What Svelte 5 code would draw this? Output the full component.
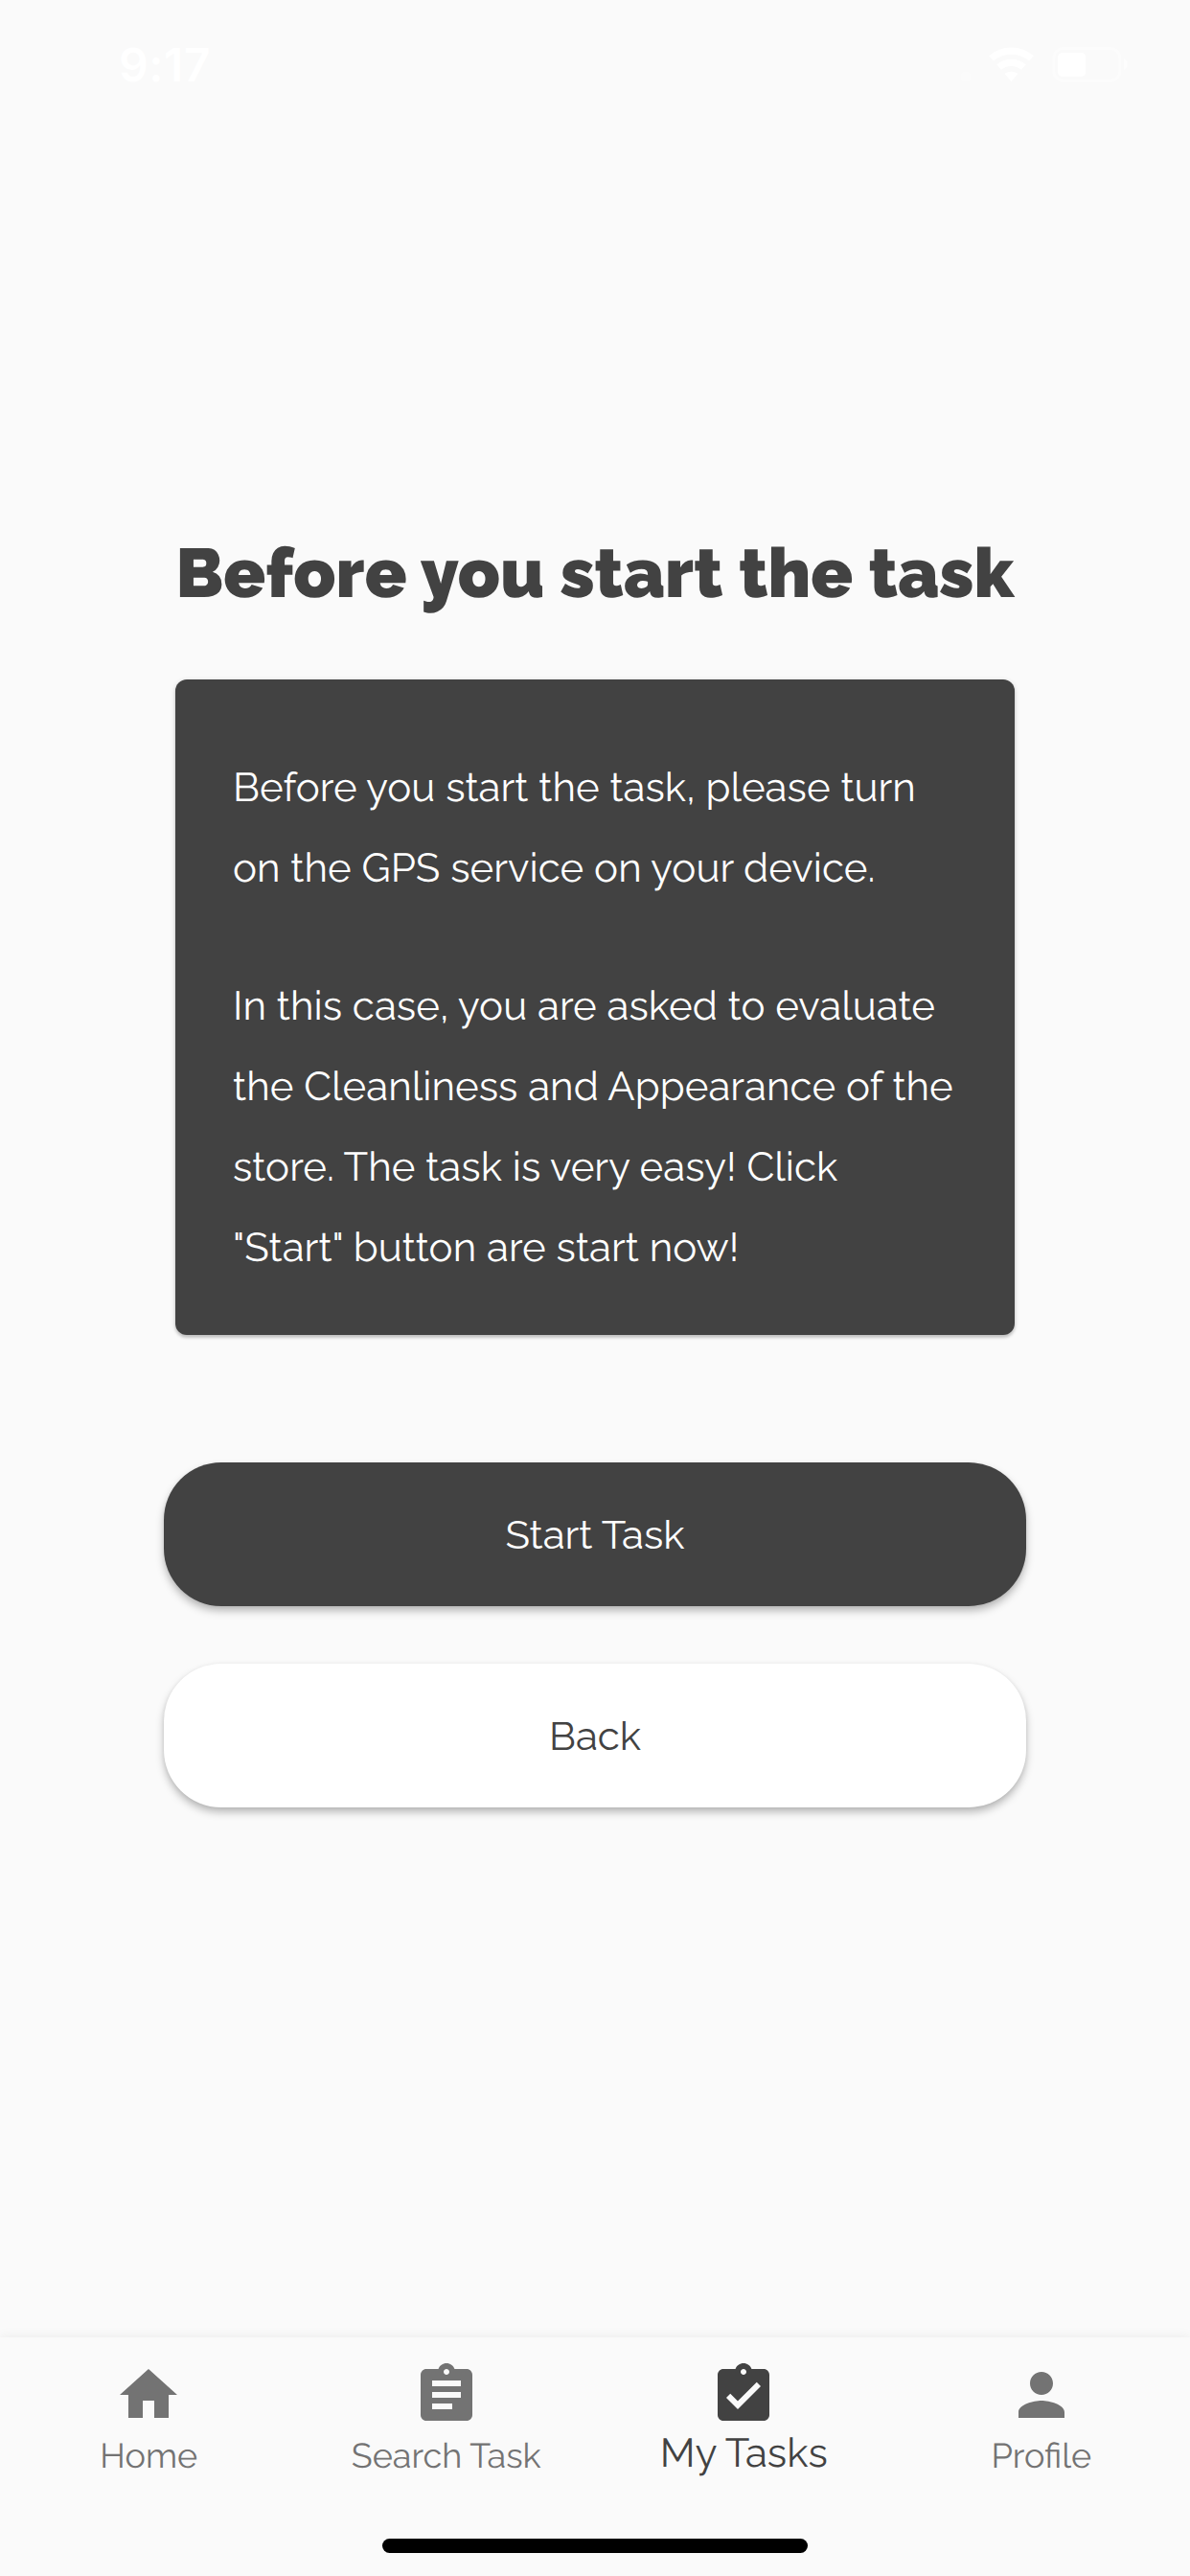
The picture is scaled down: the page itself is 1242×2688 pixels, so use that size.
<script>
  const tabs = [
    { label: 'Home', icon: 'M10 20v-6h4v6h5v-8h3L12 3 2 12h3v8z' },
    {
      label: 'Search Task',
      icon: 'M19 3h-4.180C14.400 1.840 13.300 1 12 1c-1.300 0-2.400.84-2.820 2H5c-1.100 0-2 .9-2 2v14c0 1.100.9 2 2 2h14c1.100 0 2-.9 2-2V5c0-1.100-.9-2-2-2zm-7 0c.55 0 1 .45 1 1s-.45 1-1 1-1-.45-1-1 .45-1 1-1zm2 14H7v-2h7v2zm3-4H7v-2h10v2zm0-4H7V7h10v2z'
    },
    {
      label: 'My Tasks',
      active: true,
      icon: 'M19 3h-4.180C14.400 1.840 13.300 1 12 1c-1.300 0-2.400.84-2.820 2H5c-1.100 0-2 .9-2 2v14c0 1.100.9 2 2 2h14c1.100 0 2-.9 2-2V5c0-1.100-.9-2-2-2zm-7 0c.55 0 1 .45 1 1s-.45 1-1 1-1-.45-1-1 .45-1 1-1zm-2 14l-4-4 1.410-1.410L10 14.170l6.590-6.590L18 9l-8 8z'
    },
    {
      label: 'Profile',
      icon: 'M12 12c2.210 0 4-1.790 4-4s-1.790-4-4-4-4 1.790-4 4 1.790 4 4 4zm0 2c-2.670 0-8 1.340-8 4v2h16v-2c0-2.660-5.330-4-8-4z'
    }
  ];
</script>

<div class="screen">
  <header class="status">
    <span class="time">9:17</span>
    <svg class="indicators" width="181" height="38" viewBox="0 28 181 38">
      <circle cx="8" cy="60" r="5.500" fill="#fff" opacity="0.3" />
      <g fill="none" stroke="#fff" stroke-width="7.300">
        <path d="M34.500 40.900a32 32 0 0 1 42 0" />
        <path d="M42.600 50.100a19.700 19.700 0 0 1 25.800 0" />
      </g>
      <path d="M48.500 57a10.700 10.700 0 0 1 14 0l-7 8z" fill="#fff" />
      <rect x="99.800" y="30.500" width="69" height="33.700" rx="10" fill="none" stroke="#fff" stroke-width="3" opacity="0.4" />
      <rect x="104" y="35" width="29.300" height="25" rx="5" fill="#fff" />
      <path d="M172.700 40.700c5.500 2 5.500 10.600 0 12.600z" fill="#fff" opacity="0.5" />
    </svg>
  </header>

  <main>
    <h1>Before you start the task</h1>
    <section class="card">
      <p>Before you start the task, please turn on the GPS service on your device.</p>
      <p>In this case, you are asked to evaluate the Cleanliness and Appearance of the store. The task is very easy! Click<br />"Start" button are start now!</p>
    </section>
    <div class="actions">
      <button class="primary">Start Task</button>
      <button>Back</button>
    </div>
  </main>

  <nav>
    <div class="tabs">
      {#each tabs as tab}
        <a class="tab" class:active={tab.active} href="#top">
          <svg width="72" height="72" viewBox="0 0 24 24" fill="currentColor"><path d={tab.icon} /></svg>
          <span>{tab.label}</span>
        </a>
      {/each}
    </div>
    <div class="home-indicator"></div>
  </nav>
</div>

<style>
  :global(body) {
    margin: 0;
    background: #fafafa;
  }

  .screen {
    display: flex;
    flex-direction: column;
    width: 1242px;
    height: 2688px;
    overflow: hidden;
    background: #fafafa;
    color: #424242;
    font-family: Raleway, Lato, 'Open Sans', sans-serif;
    font-size: 42px;
    text-rendering: geometricPrecision;
  }

  .status {
    display: flex;
    justify-content: space-between;
    align-items: flex-start;
    box-sizing: border-box;
    height: 132px;
    padding: 48px 61px 0 124px;
    color: #fff;
  }

  .time {
    margin-top: -9px;
    font-family: Inter, sans-serif;
    font-size: 48px;
    font-weight: 600;
    line-height: 58px;
    letter-spacing: 0.500px;
  }

  main {
    flex: 1;
    display: flex;
    flex-direction: column;
    align-items: center;
    padding-top: 423px;
  }

  h1 {
    margin: 0 0 69px;
    font-size: 72px;
    font-weight: 900;
    line-height: 85px;
    letter-spacing: 0.100px;
    white-space: nowrap;
  }

  .card {
    display: flex;
    flex-direction: column;
    gap: 60px;
    box-sizing: border-box;
    width: 876px;
    height: 684px;
    padding: 71px 60px 0;
    border-radius: 12px;
    background: #424242;
    box-shadow: 0 3px 3px rgba(0, 0, 0, 0.14), 0 1px 5px rgba(0, 0, 0, 0.16);
    color: #fff;
  }

  p {
    margin: 0;
    line-height: 84px;
    letter-spacing: 0.060px;
  }

  .actions {
    display: flex;
    flex-direction: column;
    gap: 60px;
    margin-top: 133px;
  }

  button {
    width: 900px;
    height: 150px;
    padding: 0;
    border: 0;
    border-radius: 60px;
    background: #fff;
    box-shadow: 0 5px 8px rgba(0, 0, 0, 0.26), 0 1px 4px rgba(0, 0, 0, 0.06);
    color: #424242;
    font: inherit;
  }

  .primary {
    background: #424242;
    color: #fff;
  }

  nav {
    display: flex;
    flex-direction: column;
    align-items: center;
    justify-content: space-between;
    box-sizing: border-box;
    height: 249px;
    padding-bottom: 24px;
    background: #fafafa;
    box-shadow: 0 0 12px rgba(0, 0, 0, 0.07);
  }

  .tabs {
    display: grid;
    grid-template-columns: repeat(4, 1fr);
    width: 100%;
  }

  .tab {
    display: flex;
    flex-direction: column;
    align-items: center;
    padding-top: 24px;
    color: #737373;
    font-size: 36px;
    text-decoration: none;
  }

  .tab span {
    margin-top: 7px;
    line-height: 42px;
  }

  .active {
    color: #424242;
    font-size: 42px;
  }

  .active span {
    margin-top: 0;
    line-height: 49px;
  }

  .home-indicator {
    width: 444px;
    height: 15px;
    border-radius: 8px;
    background: #000;
  }
</style>
